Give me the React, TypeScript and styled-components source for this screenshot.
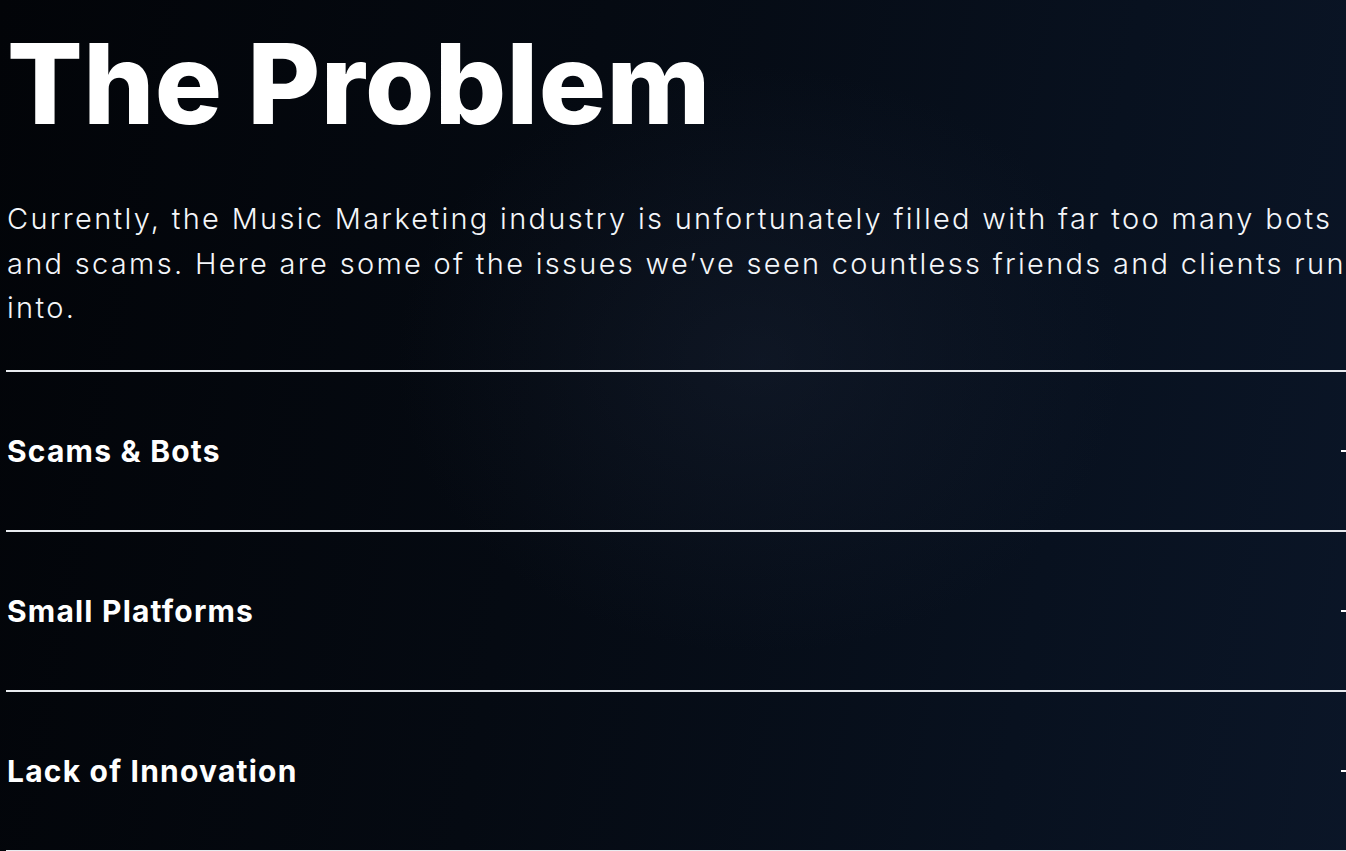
import React from "react";
import styled, { createGlobalStyle } from "styled-components";

const GlobalStyle = createGlobalStyle`
  html, body {
    margin: 0;
    padding: 0;
    overflow: hidden;
    background: #03060b;
  }
  body {
    font-family: Inter, "Noto Sans", sans-serif;
    color: #ffffff;
  }
`;

const Page = styled.main`
  min-height: 851px;
  width: 100%;
  overflow: hidden;
  background:
    radial-gradient(ellipse 520px 420px at 760px 360px, rgba(30, 40, 60, 0.35), transparent 70%),
    linear-gradient(100deg, #020408 0%, #050a12 40%, #08111f 75%, #0b1628 100%);
`;

const Section = styled.section`
  width: 1351px;
  margin-left: 6px;
  padding-top: 22px;
`;

const Heading = styled.h1`
  margin: 0 0 0 1px;
  font-size: 112px;
  line-height: 1.1;
  font-weight: 800;
  letter-spacing: 0.4px;
`;

const Intro = styled.p`
  margin: 52px 0 39px 1px;
  font-size: 29px;
  line-height: 44.5px;
  font-weight: 300;
  letter-spacing: 2.3px;
  color: #f4f6f9;
`;

const List = styled.div`
  display: flex;
  flex-direction: column;
`;

const Item = styled.div`
  height: 160px;
  box-sizing: border-box;
  border-top: 2px solid #e8ebef;
  display: flex;
  align-items: center;
  justify-content: space-between;
`;

const Title = styled.h3`
  margin: 0 0 0 1px;
  font-size: 30px;
  font-weight: 700;
  letter-spacing: 1.2px;
`;

const Toggle = styled.span`
  position: relative;
  width: 16px;
  height: 16px;
  flex-shrink: 0;

  &::before,
  &::after {
    content: "";
    position: absolute;
    background: #ffffff;
  }
  &::before {
    left: 0;
    right: 0;
    top: 7px;
    height: 2px;
  }
  &::after {
    top: 0;
    bottom: 0;
    left: 7px;
    width: 2px;
  }
`;

const problems = ["Scams & Bots", "Small Platforms", "Lack of Innovation"];

const App: React.FC = () => {
  return (
    <Page>
      <GlobalStyle />
      <Section>
        <Heading>The Problem</Heading>
        <Intro>
          Currently, the Music Marketing industry is unfortunately filled with far too many bots
          and scams. Here are some of the issues we’ve seen countless friends and clients run
          into.
        </Intro>
        <List>
          {problems.map((p) => (
            <Item key={p}>
              <Title>{p}</Title>
              <Toggle />
            </Item>
          ))}
          <Item />
        </List>
      </Section>
    </Page>
  );
};

export default App;
